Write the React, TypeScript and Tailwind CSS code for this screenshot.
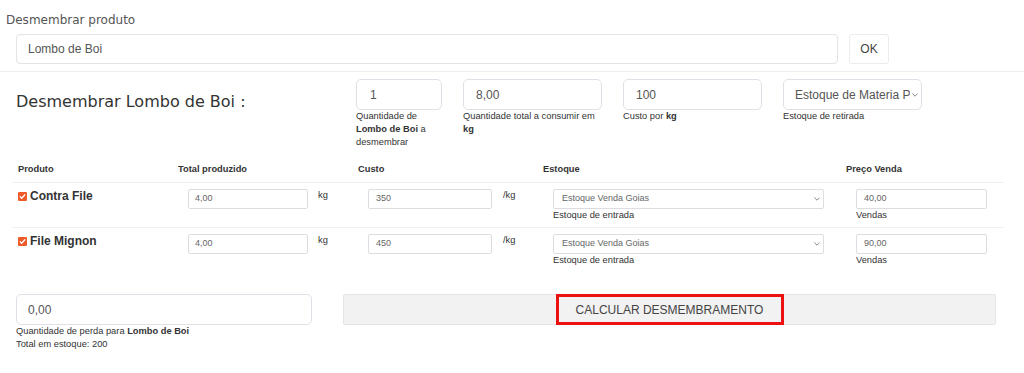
import React from "react";

function Chevron({ className }: { className?: string }) {
  return (
    <svg className={className} viewBox="0 0 10 6" fill="none" aria-hidden="true">
      <path d="M1 1l4 4 4-4" stroke="#666" strokeWidth="1.3" strokeLinecap="round" strokeLinejoin="round" />
    </svg>
  );
}

function Check() {
  return (
    <span className="flex h-[9px] w-[9px] items-center justify-center rounded-[1px] bg-[#ee5a2a]">
      <svg className="h-[7px] w-[7px]" viewBox="0 0 8 8" fill="none" aria-hidden="true">
        <path d="M1.3 4.2l1.8 1.8 3.6-4" stroke="#fff" strokeWidth="1.4" strokeLinecap="round" strokeLinejoin="round" />
      </svg>
    </span>
  );
}

const products = [
  { name: "Contra File", total: "4,00", cost: "350", price: "40,00" },
  { name: "File Mignon", total: "4,00", cost: "450", price: "90,00" },
];

export default function App() {
  return (
    <div className="h-[373px] w-[1024px] overflow-hidden bg-white font-['Liberation_Sans',Arial,sans-serif] text-[#333]">
      {/* product search */}
      <div className="border-b border-[#eeeeee] pb-[7px]">
        <div className="pl-[6px] pt-[13px] font-['DejaVu_Sans',sans-serif] text-[12px] leading-[14px] text-[#555]">
          Desmembrar produto
        </div>
        <div className="mt-[7px] flex gap-[11px] pl-4">
          <div className="flex h-[30px] w-[822px] items-center rounded-[4px] border border-[#e3e3e8] pl-[11px] text-[12px] text-[#555]">
            Lombo de Boi
          </div>
          <button className="h-[30px] w-[40px] rounded-[3px] border border-[#ececf0] bg-white text-[12px] text-[#444]">
            OK
          </button>
        </div>
      </div>

      {/* parameters */}
      <div className="flex pt-[7px]">
        <div className="w-[356px] pl-4 pt-[13px] font-['DejaVu_Sans',sans-serif] text-[16px] leading-[20px] text-[#333]">
          Desmembrar Lombo de Boi :
        </div>
        <div className="w-[107px]">
          <div className="flex h-[31px] w-[86px] items-center rounded-[5px] border border-[#e0e1e8] pl-[13px] text-[12px] text-[#555]">
            1
          </div>
          <div className="text-[9.3px] leading-[13px]">
            <div>Quantidade de</div>
            <div>
              <b>Lombo de Boi</b> a
            </div>
            <div>desmembrar</div>
          </div>
        </div>
        <div className="w-[160px]">
          <div className="flex h-[31px] w-[139px] items-center rounded-[5px] border border-[#e0e1e8] pl-[12px] text-[12px] text-[#555]">
            8,00
          </div>
          <div className="text-[9.3px] leading-[13px]">
            <div>Quantidade total a consumir em</div>
            <b>kg</b>
          </div>
        </div>
        <div className="w-[160px]">
          <div className="flex h-[31px] w-[139px] items-center rounded-[5px] border border-[#e0e1e8] pl-[12px] text-[12px] text-[#555]">
            100
          </div>
          <p className="text-[9.3px] leading-[13px]">
            Custo por <b>kg</b>
          </p>
        </div>
        <div className="w-[139px]">
          <div className="flex h-[31px] w-[139px] items-center rounded-[5px] border border-[#e0e1e8] pl-[11px] pr-[3px] text-[12px] text-[#555]">
            <span className="min-w-0 flex-1 overflow-hidden whitespace-nowrap">Estoque de Materia P</span>
            <Chevron className="ml-[2px] h-[4px] w-[6px] shrink-0" />
          </div>
          <p className="text-[9.3px] leading-[13px]">Estoque de retirada</p>
        </div>
      </div>

      {/* products table */}
      <div className="mx-3 mt-[11px] w-[992px]">
        <div className="grid grid-cols-[160px_180px_185px_303px_164px] border-b border-[#f0f0f0] pb-[6px] pt-[3px] text-[9.3px] font-bold leading-[13px]">
          <div className="pl-[6px]">Produto</div>
          <div className="pl-[6px]">Total produzido</div>
          <div className="pl-[6px]">Custo</div>
          <div className="pl-[6px]">Estoque</div>
          <div className="pl-[6px]">Preço Venda</div>
        </div>
        {products.map((p, i) => (
          <div
            key={p.name}
            className={`grid grid-cols-[160px_180px_185px_303px_164px] py-[6px] ${i === 0 ? "border-b border-[#f0f0f0]" : ""}`}
          >
            <div className="flex items-center gap-[3px] self-start pl-[6px] text-[12px] font-bold leading-[14px]">
              <Check />
              {p.name}
            </div>
            <div className="flex items-start pl-4">
              <div className="flex h-[20px] w-[120px] items-center rounded-[2px] border border-[#dcdce2] pl-[6px] text-[9px] text-[#666]">
                {p.total}
              </div>
              <span className="ml-[10px] text-[9.3px] leading-[12px]">kg</span>
            </div>
            <div className="flex items-start pl-4">
              <div className="flex h-[20px] w-[124px] items-center rounded-[2px] border border-[#dcdce2] pl-[7px] text-[9px] text-[#666]">
                {p.cost}
              </div>
              <span className="ml-[11px] text-[9.3px] leading-[12px]">/kg</span>
            </div>
            <div className="pl-4">
              <div className="flex h-[20px] w-[271px] items-center justify-between rounded-[2px] border border-[#dcdce2] pl-[8px] pr-[3px] text-[9px] text-[#666]">
                <span>Estoque Venda Goias</span>
                <Chevron className="h-[4px] w-[6px]" />
              </div>
              <div className="text-[9.3px] leading-[12px]">Estoque de entrada</div>
            </div>
            <div className="pl-4">
              <div className="flex h-[20px] w-[131px] items-center rounded-[2px] border border-[#dcdce2] pl-[7px] text-[9px] text-[#666]">
                {p.price}
              </div>
              <div className="text-[9.3px] leading-[12px]">Vendas</div>
            </div>
          </div>
        ))}
      </div>

      {/* loss + action */}
      <div className="mt-[22px] flex items-start gap-[31px] pl-4">
        <div>
          <div className="flex h-[31px] w-[296px] items-center rounded-[5px] border border-[#e0e1e8] pl-[11px] text-[12px] text-[#555]">
            0,00
          </div>
          <p className="text-[9.3px] leading-[13px]">
            Quantidade de perda para <b>Lombo de Boi</b>
          </p>
          <p className="text-[9.3px] leading-[13px]">Total em estoque: 200</p>
        </div>
        <button className="flex h-[31px] w-[653px] items-center justify-center rounded-[2px] border border-[#e4e4e4] bg-[#f2f2f2]">
          <span className="-my-px flex h-[31px] w-[228px] items-center justify-center border-[3px] border-[#ee1111] text-[12px] text-[#444]">
            CALCULAR DESMEMBRAMENTO
          </span>
        </button>
      </div>
    </div>
  );
}
